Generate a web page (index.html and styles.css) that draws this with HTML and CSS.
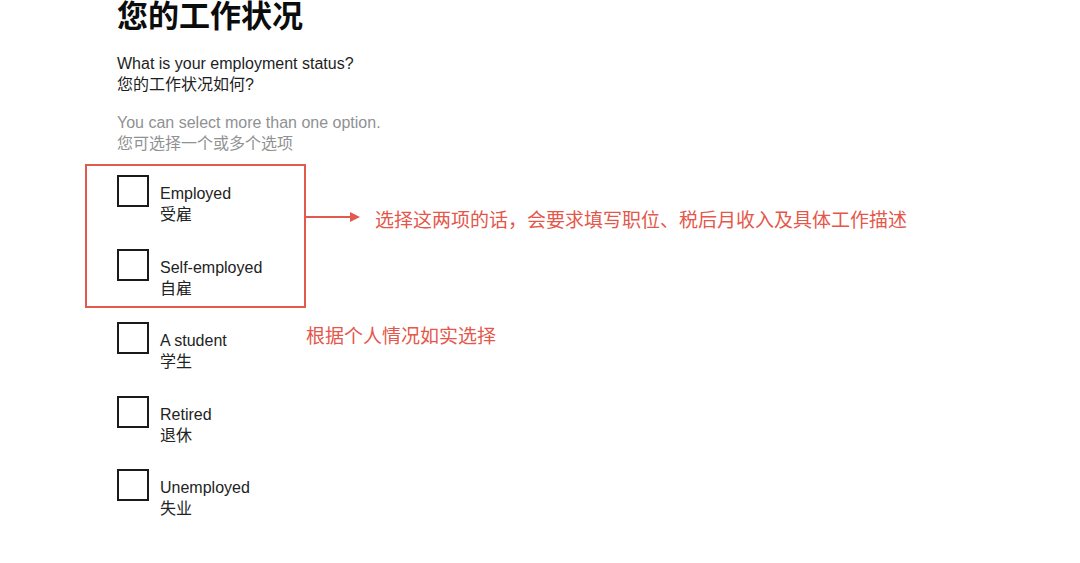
FILE: index.html
```html
<!DOCTYPE html>
<html lang="zh-CN">
<head>
<meta charset="utf-8">
<title>您的工作状况</title>
<link rel="stylesheet" href="styles.css">
</head>
<body>
<main class="page">
  <h1 class="title">您的工作状况</h1>
  <div class="question">
    <p>What is your employment status?</p>
    <p>您的工作状况如何?</p>
  </div>
  <div class="hint">
    <p>You can select more than one option.</p>
    <p>您可选择一个或多个选项</p>
  </div>
  <ul class="options">
    <li class="option"><span class="box"></span><span class="label"><span>Employed</span><span>受雇</span></span></li>
    <li class="option"><span class="box"></span><span class="label"><span>Self-employed</span><span>自雇</span></span></li>
    <li class="option"><span class="box"></span><span class="label"><span>A student</span><span>学生</span></span></li>
    <li class="option"><span class="box"></span><span class="label"><span>Retired</span><span>退休</span></span></li>
    <li class="option"><span class="box"></span><span class="label"><span>Unemployed</span><span>失业</span></span></li>
  </ul>
  <div class="note-frame"></div>
  <div class="note-arrow"><span class="line"></span><span class="head"></span></div>
  <p class="note note-one">选择这两项的话，会要求填写职位、税后月收入及具体工作描述</p>
  <p class="note note-two">根据个人情况如实选择</p>
</main>
</body>
</html>
```

FILE: styles.css
```css
html, body {
  margin: 0;
  padding: 0;
  background: #ffffff;
}
body {
  width: 1080px;
  height: 563px;
  overflow: hidden;
  font-family: "Liberation Sans", "Noto Sans CJK SC", sans-serif;
  color: #1d1e1e;
}
.page {
  position: relative;
  padding-left: 117px;
  display: flex;
  flex-direction: column;
}
p { margin: 0; }
.title {
  margin: -2px 0 0 0;
  font-size: 31px;
  line-height: 32px;
  font-weight: 700;
  color: #0b0c0c;
  font-family: "Noto Sans CJK SC", sans-serif;
}
.question {
  margin-top: 23px;
  font-size: 16px;
  line-height: 21px;
  color: #1d1e1e;
}
.hint {
  margin-top: 17px;
  font-size: 16px;
  line-height: 21px;
  color: #8f9192;
}
.options {
  list-style: none;
  margin: 21px 0 0 0;
  padding: 0;
  display: flex;
  flex-direction: column;
  gap: 23.5px;
}
.option {
  display: flex;
  align-items: flex-start;
  gap: 11px;
}
.box {
  width: 28px;
  height: 28px;
  border: 2px solid #1a1a1a;
  flex: none;
}
.label {
  display: flex;
  flex-direction: column;
  padding-top: 8px;
  font-size: 16px;
  line-height: 21px;
  color: #222323;
}
.note-frame {
  position: absolute;
  left: 85px;
  top: 164px;
  width: 217px;
  height: 140px;
  border: 2px solid #e25a4e;
}
.note-arrow {
  position: absolute;
  left: 306px;
  top: 212px;
  display: flex;
  align-items: center;
}
.note-arrow .line {
  width: 44px;
  height: 2px;
  background: #e25a4e;
}
.note-arrow .head {
  width: 0;
  height: 0;
  border-top: 5px solid transparent;
  border-bottom: 5px solid transparent;
  border-left: 10px solid #e25a4e;
}
.note {
  position: absolute;
  font-family: "Noto Sans CJK SC", sans-serif;
  font-size: 19px;
  line-height: 24px;
  color: #e4574b;
  white-space: nowrap;
}
.note-one {
  left: 375px;
  top: 207px;
}
.note-two {
  left: 306px;
  top: 323px;
}
```
